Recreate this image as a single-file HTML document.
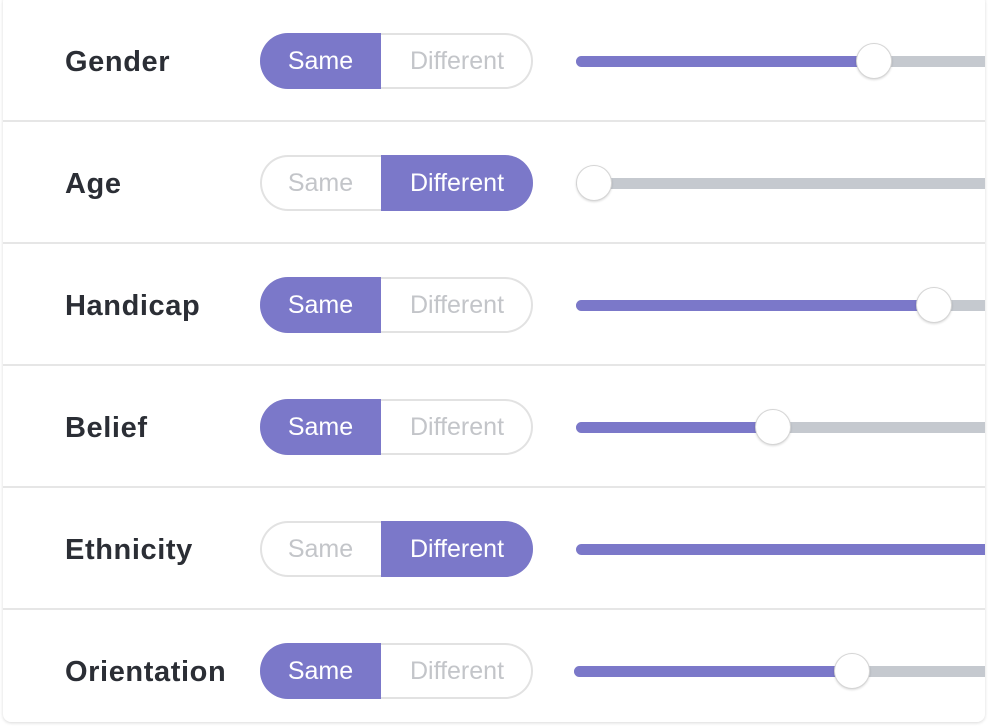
<!DOCTYPE html>
<html><head><style>
body{margin:0;width:988px;height:728px;background:#fff;overflow:hidden;font-family:"Liberation Sans",Arial,sans-serif;}
.card{position:absolute;left:3px;top:-6px;width:982px;height:728px;border-radius:8px;background:#fff;box-shadow:0 1px 3px rgba(0,0,0,.15);overflow:hidden;}
.row{position:absolute;left:0;width:982px;height:122px;border-bottom:2px solid #e6e6e6;box-sizing:border-box;}
.lbl{position:absolute;left:62px;top:1px;line-height:122px;font-size:29px;font-weight:bold;color:#2b2e35;letter-spacing:0.6px;}
.tg{position:absolute;left:257px;top:33px;width:273px;height:56px;border-radius:28px;box-shadow:inset 0 0 0 2px #e2e2e2;overflow:hidden;}
.tg span{position:absolute;top:0;height:56px;line-height:57px;font-size:25px;color:#c3c5c9;text-align:center;}
.tg .a{left:0;width:121px;}
.tg .b{left:121px;width:152px;}
.tg .on{background:#7b78c9;color:#fff;}
.tr{position:absolute;left:573px;top:56px;right:-10px;height:11px;border-radius:6px;background:#c5c9cf;}
.fill{position:absolute;left:0;top:0;height:11px;border-radius:6px;background:#7b78c9;}
.th{position:absolute;top:-13px;width:36px;height:36px;margin-left:-18px;border-radius:50%;background:#fff;border:1px solid #d5d5d5;box-sizing:border-box;box-shadow:0 1px 2px rgba(0,0,0,.15);}
</style></head><body>
<div class="card">
<div class="row" style="top:6px"><div class="lbl">Gender</div><div class="tg"><span class="a on">Same</span><span class="b">Different</span></div><div class="tr"><div class="fill" style="width:298px"></div><div class="th" style="left:298px"></div></div></div>
<div class="row" style="top:128px"><div class="lbl">Age</div><div class="tg"><span class="a">Same</span><span class="b on">Different</span></div><div class="tr"><div class="th" style="left:18px"></div></div></div>
<div class="row" style="top:250px"><div class="lbl">Handicap</div><div class="tg"><span class="a on">Same</span><span class="b">Different</span></div><div class="tr"><div class="fill" style="width:358px"></div><div class="th" style="left:358px"></div></div></div>
<div class="row" style="top:372px"><div class="lbl">Belief</div><div class="tg"><span class="a on">Same</span><span class="b">Different</span></div><div class="tr"><div class="fill" style="width:197px"></div><div class="th" style="left:197px"></div></div></div>
<div class="row" style="top:494px"><div class="lbl">Ethnicity</div><div class="tg"><span class="a">Same</span><span class="b on">Different</span></div><div class="tr" style="background:#7b78c9"></div></div>
<div class="row" style="top:616px;border-bottom:none"><div class="lbl">Orientation</div><div class="tg"><span class="a on">Same</span><span class="b">Different</span></div><div class="tr" style="left:571px"><div class="fill" style="width:278px"></div><div class="th" style="left:278px"></div></div></div>
</div>
</body></html>
